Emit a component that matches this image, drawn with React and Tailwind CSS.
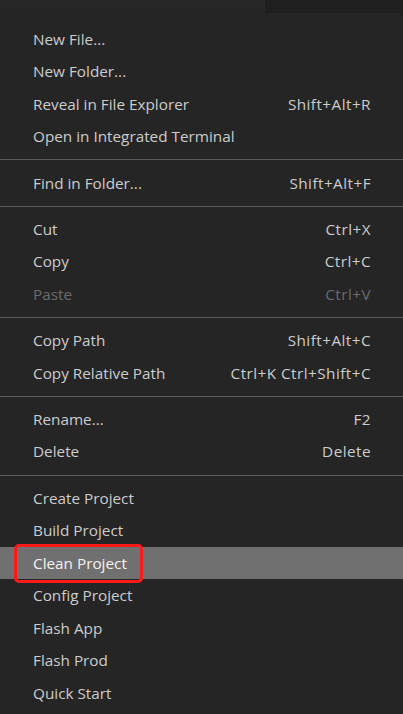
const groups = [
  [
    { label: 'New File...' },
    { label: 'New Folder...' },
    { label: 'Reveal in File Explorer', shortcut: 'Shift+Alt+R' },
    { label: 'Open in Integrated Terminal' },
  ],
  [{ label: 'Find in Folder...', shortcut: 'Shift+Alt+F' }],
  [
    { label: 'Cut', shortcut: 'Ctrl+X' },
    { label: 'Copy', shortcut: 'Ctrl+C' },
    { label: 'Paste', shortcut: 'Ctrl+V', disabled: true },
  ],
  [
    { label: 'Copy Path', shortcut: 'Shift+Alt+C' },
    { label: 'Copy Relative Path', shortcut: 'Ctrl+K Ctrl+Shift+C' },
  ],
  [
    { label: 'Rename...', shortcut: 'F2' },
    { label: 'Delete', shortcut: 'Delete' },
  ],
  [
    { label: 'Create Project' },
    { label: 'Build Project' },
    { label: 'Clean Project', active: true },
    { label: 'Config Project' },
    { label: 'Flash App' },
    { label: 'Flash Prod' },
    { label: 'Quick Start' },
  ],
];

export default function App() {
  return (
    <div
      className="w-[403px] h-[714px] overflow-hidden bg-[#1f1f1f] flex flex-col"
      style={{ fontFamily: '"Open Sans", "Noto Sans", sans-serif' }}
    >
      {/* 위쪽 배경 */}
      <div className="h-[13px] shrink-0 flex">
        <div className="w-[265px] bg-[#262626]" />
        <div className="flex-1 bg-[#1f1f1f]" />
      </div>

      {/* 메뉴 */}
      <div className="flex-1 bg-[#252526] rounded-tr-[5px] pt-[10px]">
        {groups.map((items, gi) => (
          <div key={gi}>
            {gi > 0 && <div className="h-px bg-[#5a5a5a] my-[6.4px]" />}
            {items.map((it) => (
              <Row key={it.label} {...it} />
            ))}
          </div>
        ))}
      </div>
    </div>
  );
}

function Row({ label, shortcut, disabled, active }) {
  const color = disabled ? 'text-[#6b6b6b]' : active ? 'text-[#f3f3f3]' : 'text-[#cccccc]';
  return (
    <div
      className={`h-[32.5px] flex items-center justify-between pl-[33px] pr-[32px] text-[15.3px] ${color} ${
        active ? 'bg-[#707070]' : ''
      }`}
    >
      <span className="relative">
        {label}
        {active && (
          <span className="absolute -left-[19px] -right-[16px] -top-[8px] -bottom-[8px] border-[3px] border-[#ff1a1a] rounded-[5px]" />
        )}
      </span>
      {shortcut && <span className="tracking-[0.45px]">{shortcut}</span>}
    </div>
  );
}
